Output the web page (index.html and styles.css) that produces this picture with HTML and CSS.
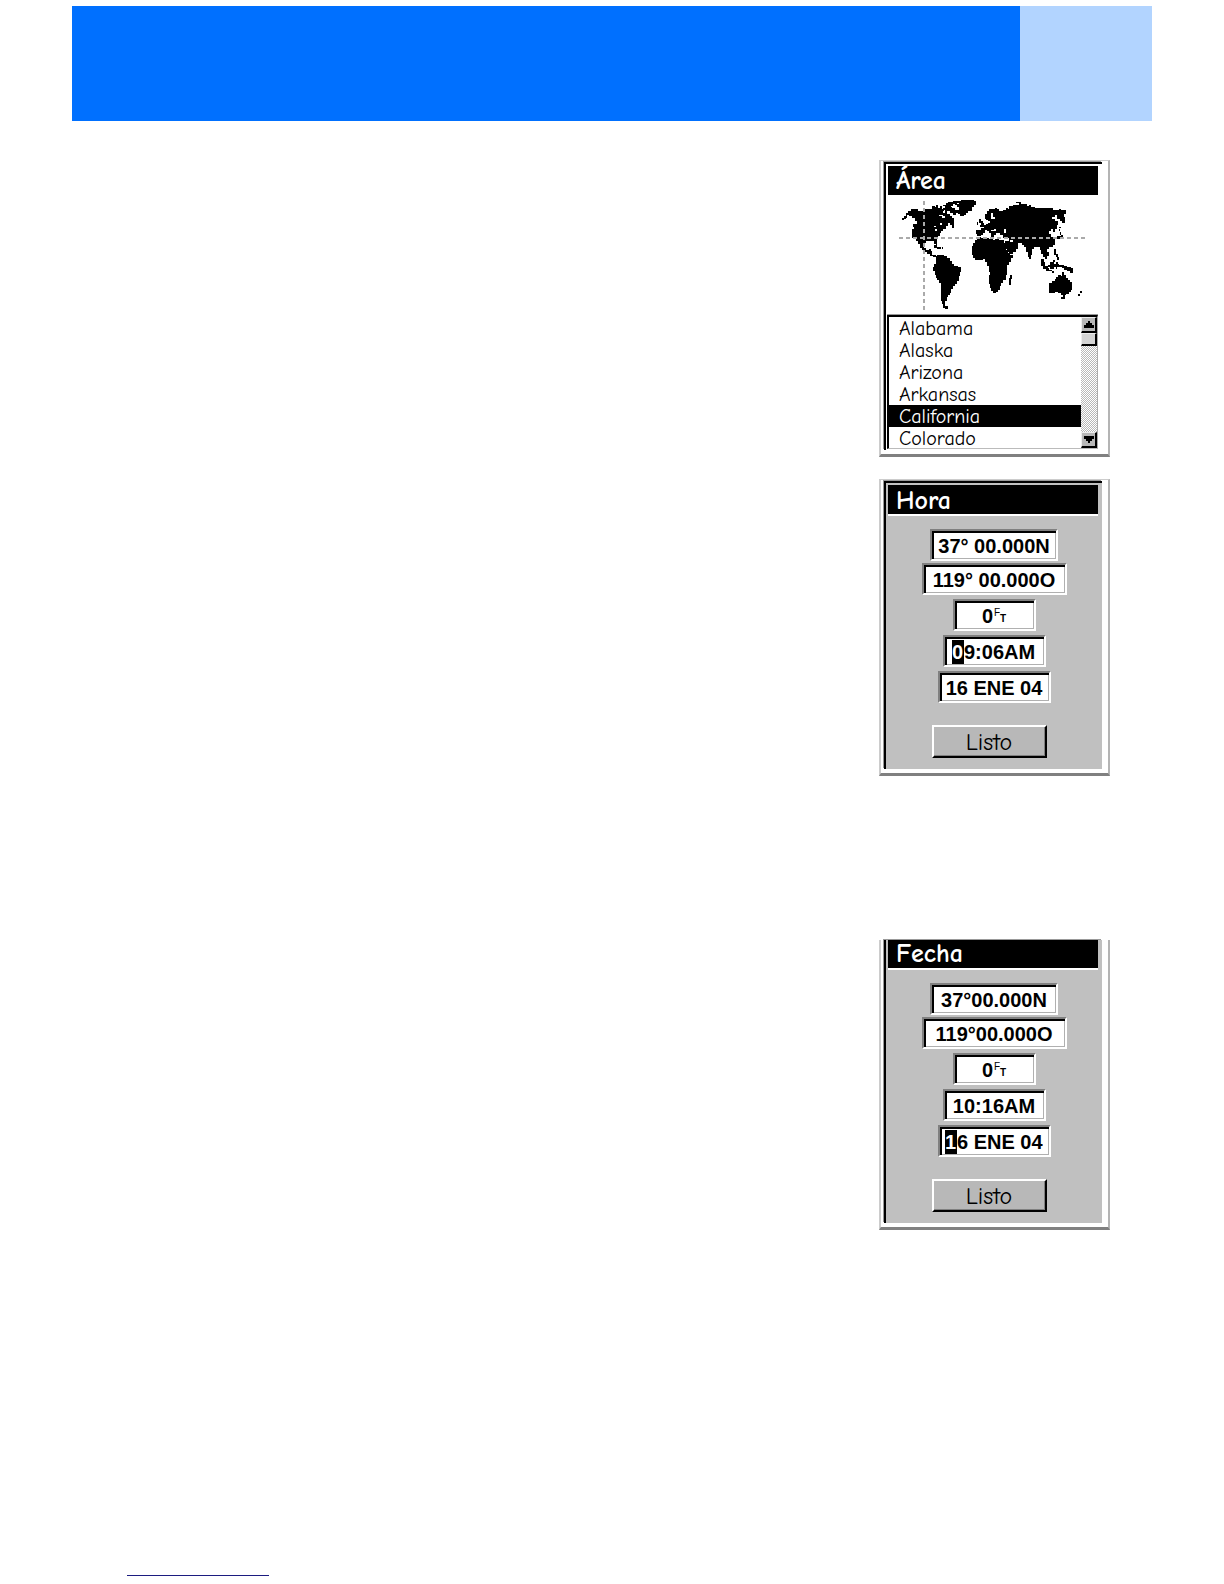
FILE: index.html
```html
<!DOCTYPE html>
<html lang="es">
  <head>
    <meta charset="UTF-8" />
    <meta name="viewport" content="width=device-width, initial-scale=1.0" />
    <title>Área, Hora, Fecha</title>
    <link rel="stylesheet" href="styles.css">
  </head>
  <body>
    <header class="banner">
      <div class="banner-main"></div>
      <div class="banner-side"></div>
    </header>

    <main class="screens">
      <section class="panel panel-area">
        <div class="screen">
          <h2 class="title">Área</h2>
          <svg class="map" viewBox="54 135 627 360" aria-hidden="true">
            <!-- north america -->
            <path d="M93 204h6v6h-6zM101 207V199H105V190H111V184H120V177H141V182H159V177H183V168H192V172H196V166H201V174H208V168H214V176H220V184H214V190H204V198H213V203H222V196H230V192H237V198H245V205H249V233H244V226H238V220H232V228H226V236H217V242H211V250H207V258H202V266H198V272H200V290H195V282H191V273H166V280H161V294H166V299H174V296H181V303H184V316H196V322H187V319H178V312H170V305H163V299H154V294H148V282H142V273H135V263H124V238H130V232H128V222H138V212H133V204H124V199H116V196H110V203H106V207Z"/>
            <path d="M218 165H225V159H232V155H247V152H270V159H260V163H248V169H242V174H254V179H262V190H256V196H246V190H238V182H230V189H223V180H216V173H222V169H218Z"/>
            <path d="M205 183H216V190H228V197H216V194H205ZM234 170H244V178H234Z"/>
            <path d="M272 156V150H309V154H316V166H311V172H305V183H293V188H286V194H280V199H268V193H262V180H266V172H258V166H254V161H264V156Z"/>
            <path d="M191 286H196V292H210V297H199V293H191ZM214 292H218V296H214Z"/>
            <!-- south america -->
            <path d="M192 322V318H199V314H220V319H228V324H238V333H244V342H251V347H263V352H272V367H267V378H265V392H260V402H252V407H247V418H242V429H237V435H231V442H228V452H224V469H233V477H223V473H217V461H213V453H210V398H206V390H200V383H196V374H192V362H186V352H191V343H195V322Z"/>
            <!-- africa -->
            <path d="M314 270H318V262H330V263H356V268H366V271H372V267H386V270H399V282H403V291H407V300H412V309H417V315H426V325H421V335H416V346H410V376H405V389H398V398H392V409H388V420H382V426H376V430H366V424H362V414H358V402H355V375H359V365H354V347H350V335H344V326H336V330H313V324H307V316H303V288H307V278H314Z"/>
            <path d="M418 374H425V388H421V404H414V384H418Z"/>
            <!-- europe and asia -->
            <path d="M316 240H332V234H339V226H347V221H353V211H346V206H343V192H349V182H355V176H373V173H379V178H386V184H396V179H407V173H413V178H416V169H428V164H446V159H437V156H452V162H470V168H476V164H482V171H494V175H548V180H566V178H572V181H586V192H579V202H582V220H575V214H569V206H560V196H552V201H543V208H552V214H562V224H558V236H552V246H546V238H540V244H534V252H540V262H548V268H552V284H546V292H534V298H528V306H534V319H530V328H524V320H518V312H512V299H508V292H498V290H490V297H484V315H482V328H476V320H471V306H466V292H460V284H454V278H442V284H436V282H442V298H436V306H426V313H414V305H408V296H402V286H397V278H403V272H414V265H398V256H387V249H375V256H368V262H362V250H356V244H350V240H342V248H336V254H330V259H319V252H316Z"/>
            <path d="M325 206H331V214H336V220H340V230H327V224H331V218H325ZM319 216H323V224H319ZM364 252h5v8h-5z"/>
            <!-- japan, philippines, indonesia -->
            <path d="M566 230h5v5h-5zM564 238h5v5h-5zM567 246h5v8h-5zM560 258h10v-3h8v7h-9v4h-9zM536 253h5v8h-5zM551 298h5v16h-5zM556 311h5v11h-5zM560 321h6v8h-6z"/>
            <path d="M512 328H519V337H524V347H531V353H536V362H525V356H518V348H513ZM533 345H539V335H546V329H554V336H551V342H557V350H549V356H537V350H533ZM532 359H544V364H532ZM545 363H550V368H545ZM555 337H561V343H564V350H560V357H555ZM564 345H579V347H589V350H601V355H607V368H599V364H589V361H581V355H573V351H564Z"/>
            <!-- oceania -->
            <path d="M535 430V398H543V393H552V387H557V380H563V375H570V379H574V367H580V376H585V384H592V390H599V397H604V419H600V425H595V431H587V435H583V447H572V442H578V435H570V430H563V425H554V430Z"/>
            <path d="M629 424h5v6h-5zM621 432h6v5h-6z"/>
            <!-- lakes and inland seas -->
            <path class="water" d="M191 227h6v5h-6zM193 238h5v5h-5zM208 219h5v5h-5zM361 190h5v16h-5zM366 202h8v5h-8zM352 214h6v4h-6zM362 240h8v-3h7v6h-15zM401 236h5v14h-5zM418 270h8v5h-8zM232 230h4v5h-4z"/>
            <path class="cross" d="M160 152V490M86 264H650"/>
          </svg>
          <div class="listbox">
            <select class="states" size="6" aria-label="Área">
              <option>Alabama</option>
              <option>Alaska</option>
              <option>Arizona</option>
              <option>Arkansas</option>
              <option selected>California</option>
              <option>Colorado</option>
            </select>
            <div class="scrollbar">
              <button class="scroll-btn" type="button" aria-label="Subir">
                <svg class="arrow" viewBox="0 0 10 8"><path d="M4 0h2v2h2v2h2v3H0V4h2V2h2z"/></svg>
              </button>
              <div class="thumb"></div>
              <button class="scroll-btn scroll-down" type="button" aria-label="Bajar">
                <svg class="arrow" viewBox="0 0 10 8"><path d="M0 0h10v3H8v2H6v2H4V5H2V3H0z"/></svg>
              </button>
            </div>
          </div>
        </div>
      </section>

      <section class="panel panel-time">
        <form class="screen">
          <h2 class="title">Hora</h2>
          <div class="fields">
            <div class="coords">
              <input class="field lat" type="text" value="37°&nbsp;00.000N" aria-label="Latitud">
              <input class="field lon" type="text" value="119°&nbsp;00.000O" aria-label="Longitud">
            </div>
            <label class="field alt">
              <input class="digit" type="text" value="0" aria-label="Altitud"><span class="unit"><sup>F</sup><sub>T</sub></span>
            </label>
            <div class="field time">
              <input class="digit active" type="text" value="0" aria-label="Primera cifra"><input class="rest" type="text" value="9:06AM" aria-label="Hora">
            </div>
            <input class="field date" type="text" value="16 ENE 04" aria-label="Fecha">
          </div>
          <button class="done" type="button">Listo</button>
        </form>
      </section>

      <section class="panel panel-date">
        <form class="screen">
          <h2 class="title">Fecha</h2>
          <div class="fields">
            <div class="coords">
              <input class="field lat" type="text" value="37°00.000N" aria-label="Latitud">
              <input class="field lon" type="text" value="119°00.000O" aria-label="Longitud">
            </div>
            <label class="field alt">
              <input class="digit" type="text" value="0" aria-label="Altitud"><span class="unit"><sup>F</sup><sub>T</sub></span>
            </label>
            <input class="field time" type="text" value="10:16AM" aria-label="Hora">
            <div class="field date">
              <input class="digit active" type="text" value="1" aria-label="Primera cifra"><input class="rest" type="text" value="6 ENE 04" aria-label="Fecha">
            </div>
          </div>
          <button class="done" type="button">Listo</button>
        </form>
      </section>
    </main>

    <footer class="footer">
      <hr class="rule">
    </footer>
  </body>
</html>
```

FILE: styles.css
```css
* {
  box-sizing: border-box;
}

body {
  display: flex;
  flex-direction: column;
  min-height: 100vh;
  margin: 0;
  background-color: #fff;
  color: #000;
  font-family: "Comic Sans MS", "Comic Neue", "Open Sans", sans-serif;
}

.banner {
  display: grid;
  grid-template-columns: 1fr 132px;
  margin: 6px 72px 0;
}

.banner-main {
  height: 115px;
  background-color: #0070ff;
}

.banner-side {
  background-color: #b2d4ff;
}

.screens {
  display: flex;
  flex: 1;
  flex-direction: column;
  align-items: flex-end;
  padding: 39px 114px 0;
}

/* device frame */
.panel {
  width: 231px;
  padding: 1px 6px 4px 3px;
  border-style: solid;
  border-width: 1px 2px 3px 2px;
  border-color: #ccc #b4b4b4 #808080 #ccc;
}

.screen {
  display: flex;
  flex-direction: column;
  height: 100%;
  border-top: 2px solid #000;
  border-left: 2px solid #000;
  box-shadow: -1px -1px 0 #999;
}

.panel-time {
  height: 297px;
  margin-top: 22px;
}

.panel-date {
  height: 290px;
  margin-top: 164px;
  padding-top: 0;
  border-top: none;
}

.panel-time .screen,
.panel-date .screen {
  background-color: #c0c0c0;
}

.title {
  height: 29px;
  margin: 2px 4px 0 2px;
  padding-left: 8px;
  background-color: #000;
  color: #fff;
  font-size: 26px;
  font-weight: 700;
  line-height: 30px;
}

.panel-time .title,
.panel-date .title {
  height: 31px;
  border-bottom: 2px solid #fff;
  line-height: 33px;
}

.panel-date .screen {
  border-top: none;
}

.panel-date .title {
  height: 30px;
  margin-top: 0;
  line-height: 28px;
}

/* world map */
.map {
  display: block;
  height: 120px;
  margin: 0 4px 0 2px;
  shape-rendering: crispEdges;
}

.water {
  fill: #fff;
}

.cross {
  fill: none;
  stroke: #aaa;
  stroke-width: 4;
  stroke-dasharray: 12 9;
}

.listbox {
  display: flex;
  margin: 0 4px 1px 1px;
  border-style: solid;
  border-width: 2px 1px 1px 2px;
  border-color: #000 #aaa #bbb #000;
  box-shadow: 0 -1px 0 #999;
}

.states {
  flex: 1;
  min-width: 0;
  height: 131px;
  padding: 0;
  border: none;
  border-radius: 0;
  outline: none;
  background-color: #fff;
  font-family: inherit;
  font-size: 20px;
  overflow: hidden;
}

.states option {
  height: 22px;
  min-height: 22px;
  padding: 0 0 0 10px;
  border-radius: 0;
  color: #000;
  line-height: 22px;
}

.states option:checked {
  background: linear-gradient(#000, #000);
  -webkit-text-fill-color: #fff;
}

.scrollbar {
  display: flex;
  flex-direction: column;
  width: 16px;
  background: repeating-conic-gradient(#b8b8b8 0 25%, #fff 0 50%) 0 0 / 2px 2px;
}

.scroll-btn,
.thumb {
  display: flex;
  align-items: center;
  justify-content: center;
  height: 16px;
  padding: 0;
  border-style: solid;
  border-width: 1px 2px 2px 1px;
  border-color: #eee #000 #000 #eee;
  border-radius: 0;
  background-color: #b8b8b8;
}

.thumb {
  height: 13px;
  background-color: #d4d4d4;
}

.scroll-down {
  margin-top: auto;
}

.arrow {
  width: 10px;
  height: 8px;
}

/* data fields */
.fields,
.coords {
  display: flex;
  flex-direction: column;
  align-items: center;
  gap: 4px;
}

.fields {
  margin-top: 13px;
}

.coords {
  gap: 2px;
}

.field {
  display: flex;
  align-items: center;
  justify-content: center;
  height: 32px;
  padding: 2px 0 0;
  border-style: solid;
  border-width: 2px;
  border-color: #808080 #fff #fff #808080;
  border-radius: 0;
  background-color: #fff;
  box-shadow: inset 2px 2px 0 #000, inset -1px -1px 0 #b0b0b0;
  color: #000;
  font-family: "Liberation Sans", Arial, sans-serif;
  font-size: 20px;
  font-weight: 700;
  text-align: center;
}

.lat {
  width: 128px;
}

.lon {
  width: 145px;
}

.alt {
  width: 83px;
}

.time {
  width: 103px;
}

.date {
  width: 113px;
}

.digit,
.rest {
  padding: 0;
  border: none;
  background-color: transparent;
  color: inherit;
  font: inherit;
}

.digit {
  width: 12px;
  height: 24px;
}

.digit.active {
  background-color: #000;
  color: #fff;
}

.time .rest {
  width: 72px;
}

.date .rest {
  width: 86px;
}

.unit {
  display: flex;
  font-size: 10px;
  line-height: 10px;
}

.unit sup {
  margin-bottom: 6px;
  font-size: 10px;
  font-weight: 400;
  vertical-align: baseline;
}

.unit sub {
  margin-top: 6px;
  font-size: 10px;
  vertical-align: baseline;
}

.done {
  align-self: center;
  width: 115px;
  height: 33px;
  margin: 22px 10px 0 0;
  padding: 0;
  border-style: solid;
  border-width: 2px;
  border-color: #fff #000 #000 #fff;
  border-radius: 0;
  background-color: #b8b8b8;
  box-shadow: inset -1px -1px 0 #808080;
  color: #000;
  font-family: inherit;
  font-size: 24px;
}

.footer {
  padding: 0 127px 8px;
}

.rule {
  width: 142px;
  height: 1px;
  margin: 0;
  border: none;
  background-color: #1c1c80;
}
```
